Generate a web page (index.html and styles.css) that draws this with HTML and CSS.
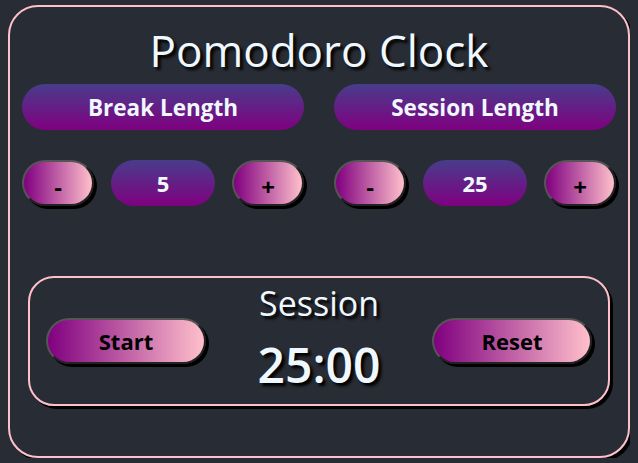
FILE: index.html
```html
<!DOCTYPE html>
<html>
<head>
<meta charset="utf-8">
<link rel="stylesheet" href="styles.css">
</head>
<body>
<div class="app">
  <h1 class="title">Pomodoro Clock</h1>
  <div class="labels">
    <div class="label" id="break-label">Break Length</div>
    <div class="label" id="session-label">Session Length</div>
  </div>
  <div class="controls">
    <div class="group">
      <button class="btn small">-</button>
      <div class="value">5</div>
      <button class="btn small">+</button>
    </div>
    <div class="group">
      <button class="btn small">-</button>
      <div class="value">25</div>
      <button class="btn small">+</button>
    </div>
  </div>
  <div class="timer">
    <button class="btn big">Start</button>
    <div class="display">
      <div class="timer-label">Session</div>
      <div class="time-left">25:00</div>
    </div>
    <button class="btn big">Reset</button>
  </div>
</div>
</body>
</html>
```
FILE: styles.css
```css
html, body {
  background: #282c34;
}
body {
  margin: 5px 8px 0;
  font-family: "Open Sans", "Noto Sans", sans-serif;
}
.app {
  box-sizing: border-box;
  height: 453px;
  border: 2px solid pink;
  border-radius: 30px;
  box-shadow: 3px 3px 0 #000;
  padding: 0 12px;
  display: flex;
  flex-direction: column;
}
.title {
  margin: 12px 0 0;
  height: 62px;
  text-align: center;
  font-size: 44px;
  font-weight: 400;
  line-height: 62px;
  color: aliceblue;
  text-shadow: 3px 3px 3px #000;
}
.labels, .controls {
  display: flex;
  gap: 30px;
}
.labels {
  margin-top: 3px;
}
.label {
  flex: 1;
  height: 46px;
  border-radius: 23px;
  background: linear-gradient(to bottom, #483d8b, #800080);
  color: aliceblue;
  font-weight: 700;
  font-size: 22.5px;
  display: flex;
  align-items: center;
  justify-content: center;
}
.controls {
  margin-top: 30px;
}
.group {
  flex: 1;
  display: flex;
  justify-content: space-between;
}
.btn {
  font-family: inherit;
  background: linear-gradient(to right, #800080, pink);
  border: 2px solid #555;
  border-right-color: #222;
  border-bottom-color: #222;
  box-shadow: 3px 3px 0 #000;
  color: #000;
  font-weight: 700;
  padding: 0;
  cursor: pointer;
}
.small {
  width: 72px;
  height: 46px;
  border-radius: 23px;
  font-size: 24px;
  font-weight: 700;
  padding-top: 6px;
}
.value {
  width: 104px;
  height: 46px;
  border-radius: 23px;
  background: linear-gradient(to bottom, #483d8b, #800080);
  color: aliceblue;
  font-weight: 700;
  font-size: 22px;
  display: flex;
  align-items: center;
  justify-content: center;
}
.timer {
  margin: 70px 6px 0;
  height: 130px;
  box-sizing: border-box;
  border: 2px solid pink;
  border-radius: 26px;
  box-shadow: 3px 3px 0 #000;
  display: flex;
  align-items: center;
  justify-content: space-between;
  padding: 0 16px;
}
.big {
  width: 160px;
  height: 46px;
  border-radius: 23px;
  font-size: 22px;
}
.display {
  display: flex;
  flex-direction: column;
  align-items: center;
  color: aliceblue;
  text-shadow: 3px 3px 3px #000;
  padding-bottom: 6px;
}
.timer-label {
  font-size: 34px;
  font-weight: 500;
  line-height: 40px;
}
.time-left {
  margin-top: 14px;
  font-size: 48px;
  font-weight: 600;
  line-height: 56px;
}
```
